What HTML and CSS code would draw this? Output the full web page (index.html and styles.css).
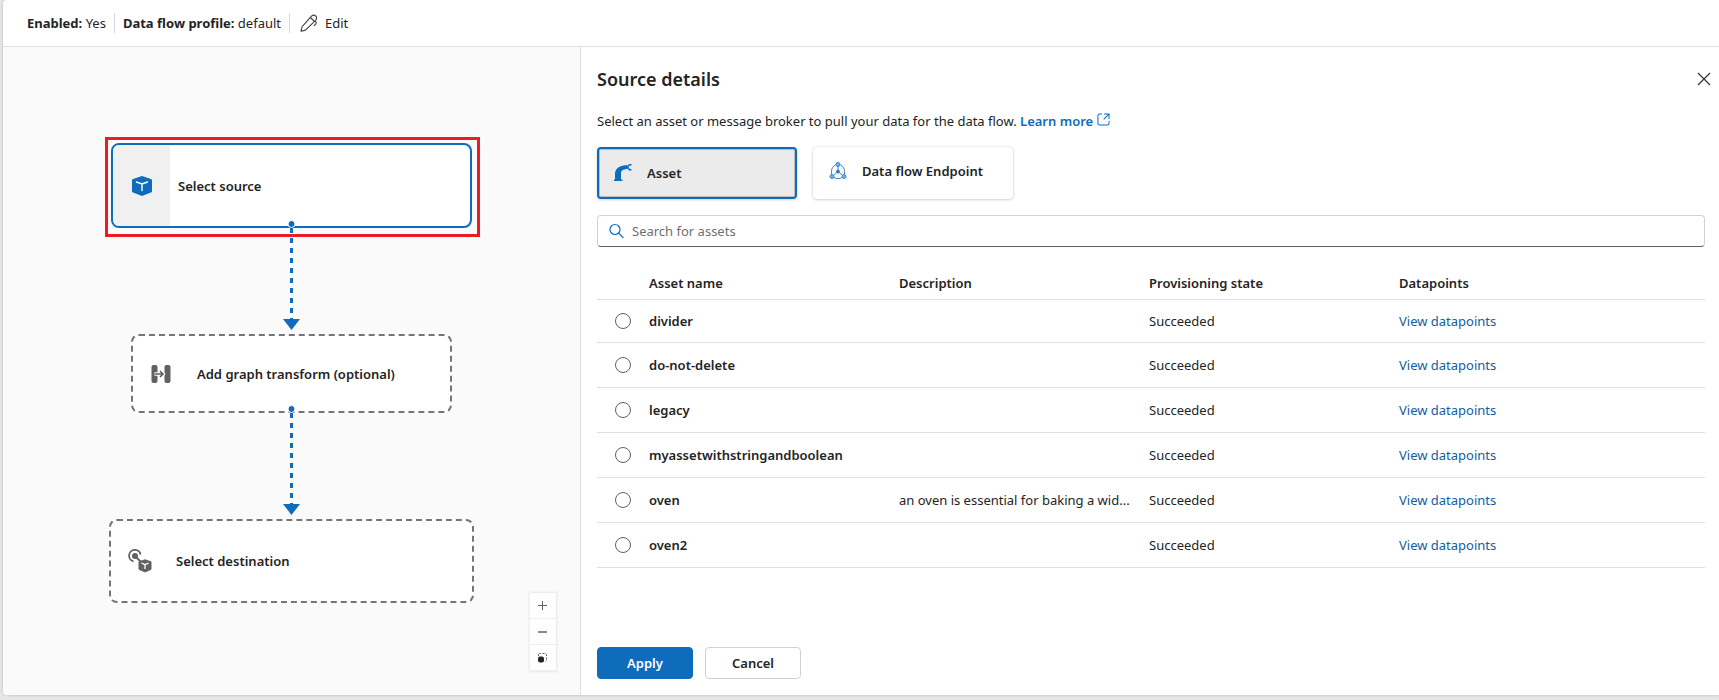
FILE: index.html
```html
<!DOCTYPE html>
<html lang="en">
<head>
  <meta charset="UTF-8" />
  <meta name="viewport" content="width=device-width, initial-scale=1.0"/>
  <title>Data flow – Source details</title>
  <link rel="stylesheet" href="styles.css">
</head>
<body>

  <div class="app">
    <header class="toolbar">
      <div class="toolbar-item"><b>Enabled:</b> Yes</div>
      <div class="toolbar-item"><b>Data flow profile:</b> default</div>
      <button class="edit-btn" type="button">
        <svg width="18" height="18" viewBox="0 0 18 18" fill="none" stroke="#424242" stroke-width="1.1" stroke-linejoin="round" stroke-linecap="round">
          <path d="M11.500 2.200c1.200-1.200 2.900-1.400 4.200-.2s1.200 3-.1 4.300L6 15.600c-.4.400-.8.600-1.300.8L1 17.200l.9-3.900c.1-.5.4-.9.700-1.200zM10.400 3.500l4.100 4M15 7c1.500 1 1.600 2.200.7 3.100l-1.500 1.500"/>
        </svg>
        Edit
      </button>
    </header>

    <main class="workspace">
      <section class="canvas">
        <div class="highlight"></div>

        <button class="node node-source" type="button">
          <span class="node-icon">
            <svg width="22" height="22" viewBox="0 0 22 22">
              <path d="M11 1l9 3q1 .4 1 1.400v10.800q0 1-1 1.400l-9 3.400-9-3.400q-1-.4-1-1.400V5.400q0-1 1-1.400z" fill="#0f6cbd"/>
              <path d="M5.500 7L11 9l5.500-2M11 9v6.500" fill="none" stroke="#fff" stroke-width="1.400" stroke-linecap="round"/>
            </svg>
          </span>
          <span class="node-label">Select source</span>
        </button>

        <button class="node node-transform" type="button">
          <svg width="20" height="20" viewBox="0 0 20 20">
            <rect x="0.500" y="1" width="6" height="18" rx="2" fill="#616161"/>
            <rect x="13.500" y="1" width="6" height="18" rx="2" fill="#616161"/>
            <path d="M3.500 10h8M8.500 6.500L12 10l-3.500 3.500" fill="none" stroke="#fff" stroke-width="3.600"/>
            <path d="M4 10h8M9 7l3 3-3 3" fill="none" stroke="#616161" stroke-width="1.600"/>
          </svg>
          <span class="node-label">Add graph transform (optional)</span>
        </button>

        <button class="node node-destination" type="button">
          <svg width="24" height="24" viewBox="0 0 24 24">
            <path d="M5.500 12.300A5.800 5.800 0 1 1 12.600 5.500" fill="none" stroke="#616161" stroke-width="1.800"/>
            <circle cx="7" cy="7" r="3" fill="#616161"/>
            <path d="M7 7l6 6" stroke="#616161" stroke-width="1.800"/>
            <path d="M17 10.800l6 2v7.500l-6 2.700-6-2.700v-7.500z" fill="#616161" stroke="#616161" stroke-linejoin="round"/>
            <path d="M13.500 14.200l3.500 1.300 3.500-1.300M17 15.500V20" fill="none" stroke="#fff" stroke-width="1.300"/>
          </svg>
          <span class="node-label">Select destination</span>
        </button>

        <!-- edges between the nodes -->
        <svg class="edges" width="20" height="300" viewBox="0 0 20 300">
          <g stroke="#0f6cbd" stroke-width="3" stroke-dasharray="5 5">
            <path d="M9.500 9V101"/>
            <path d="M9.500 194V286"/>
          </g>
          <g fill="#0f6cbd">
            <path d="M1 100h17l-8.500 11z"/>
            <path d="M1 285h17l-8.500 11z"/>
          </g>
          <g fill="#0f6cbd" stroke="#fff">
            <circle cx="9.500" cy="5" r="3.500"/>
            <circle cx="9.500" cy="190" r="3.500"/>
          </g>
        </svg>

        <div class="zoom-controls">
          <button type="button" aria-label="Zoom in">
            <svg width="10" height="10" viewBox="0 0 10 10" stroke="#616161"><path d="M0 4.500h9M4.500 0v9"/></svg>
          </button>
          <button type="button" aria-label="Zoom out">
            <svg width="10" height="10" viewBox="0 0 10 10" stroke="#8a8a8a" stroke-width="2"><path d="M0 5h9"/></svg>
          </button>
          <button type="button" aria-label="Fit view">
            <svg width="10" height="10" viewBox="0 0 10 10">
              <path d="M.5 3V1.500L1.500.5H3M4.500.5h2M7.500.5l1 1V3M8.500 4.500v2M8.500 7.500l-1 1" fill="none" stroke="#616161"/>
              <rect x="0" y="3.500" width="6" height="6" rx="2" fill="#242424"/>
            </svg>
          </button>
        </div>
      </section>

      <section class="details">
        <div class="details-head">
          <h2>Source details</h2>
          <button class="close-btn" type="button" aria-label="Close">
            <svg width="14" height="14" viewBox="0 0 14 14" stroke="#333" stroke-width="1.200"><path d="M1 1l12 12M13 1L1 13"/></svg>
          </button>
        </div>

        <p class="intro">
          Select an asset or message broker to pull your data for the data flow.
          <a href="#">Learn more
            <svg width="13" height="13" viewBox="0 0 14 14" fill="none" stroke="#0f6cbd" stroke-width="1.100" stroke-linecap="round">
              <path d="M5 1H3a2 2 0 0 0-2 2v8a2 2 0 0 0 2 2h8a2 2 0 0 0 2-2V9M8 1h5v5M13 1L7.500 6.500"/>
            </svg>
          </a>
        </p>

        <div class="source-types">
          <button class="type-card selected" type="button">
            <svg width="18" height="18" viewBox="0 0 18 18">
              <path d="M0 15.500h8.500V17H0zM1 15.500V10C1 5.500 4.500 2.200 9.500 1.500L13 1l.5 3.800-4 1C7.800 6.300 7 7.500 7 9.500v6z" fill="#0f6cbd"/>
              <path d="M12 3.500h2M17.500.8h-2.200L13.500 3l1.800 2.700h2.200" fill="none" stroke="#0f6cbd" stroke-width="1.500"/>
            </svg>
            Asset
          </button>
          <button class="type-card" type="button">
            <svg width="18" height="18" viewBox="0 0 18 18" fill="none" stroke="#3a86c8">
              <path d="M6.500 3C4 4 2.500 6.500 2.500 9.500v3M11.500 3c2.500 1 4 3.500 4 6.500v3M5 15.500c2.500 1.500 5.500 1.500 8 0"/>
              <path d="M9 4v4M9 9.500L5 13M9 9.500l4 3.500"/>
              <circle cx="9" cy="9.500" r="1.500" fill="#0f6cbd"/>
              <circle cx="9" cy="2.500" r="2" fill="#7fb2de"/>
              <circle cx="3" cy="14.500" r="2" fill="#7fb2de"/>
              <circle cx="15" cy="14.500" r="2" fill="#7fb2de"/>
            </svg>
            Data flow Endpoint
          </button>
        </div>

        <div class="search-box">
          <svg width="16" height="16" viewBox="0 0 16 16" fill="none" stroke="#0f6cbd" stroke-width="1.200" stroke-linecap="round">
            <circle cx="6" cy="6.500" r="5"/><path d="M9.700 10.200L14 14.500"/>
          </svg>
          <input type="text" placeholder="Search for assets" aria-label="Search for assets">
        </div>

        <table class="assets">
          <colgroup>
            <col class="col-pick"><col class="col-data"><col class="col-data"><col class="col-data"><col>
          </colgroup>
          <thead>
            <tr>
              <th></th><th>Asset name</th><th>Description</th><th>Provisioning state</th><th>Datapoints</th>
            </tr>
          </thead>
          <tbody>
            <tr>
              <td><input type="radio" name="asset" id="a1"></td>
              <td><label for="a1">divider</label></td><td></td><td>Succeeded</td><td><a href="#">View datapoints</a></td>
            </tr>
            <tr>
              <td><input type="radio" name="asset" id="a2"></td>
              <td><label for="a2">do-not-delete</label></td><td></td><td>Succeeded</td><td><a href="#">View datapoints</a></td>
            </tr>
            <tr>
              <td><input type="radio" name="asset" id="a3"></td>
              <td><label for="a3">legacy</label></td><td></td><td>Succeeded</td><td><a href="#">View datapoints</a></td>
            </tr>
            <tr>
              <td><input type="radio" name="asset" id="a4"></td>
              <td><label for="a4">myassetwithstringandboolean</label></td><td></td><td>Succeeded</td><td><a href="#">View datapoints</a></td>
            </tr>
            <tr>
              <td><input type="radio" name="asset" id="a5"></td>
              <td><label for="a5">oven</label></td><td>an oven is essential for baking a wid...</td><td>Succeeded</td><td><a href="#">View datapoints</a></td>
            </tr>
            <tr>
              <td><input type="radio" name="asset" id="a6"></td>
              <td><label for="a6">oven2</label></td><td></td><td>Succeeded</td><td><a href="#">View datapoints</a></td>
            </tr>
          </tbody>
        </table>

        <div class="actions">
          <button class="btn primary" type="button">Apply</button>
          <button class="btn" type="button">Cancel</button>
        </div>
      </section>
    </main>
  </div>

</body>
</html>
```
FILE: styles.css
```css
* {
  box-sizing: border-box;
}
body {
  margin: 0;
  padding: 0 0 5px 3px;
  height: 100vh;
  background: #e6e6e6;
  color: #242424;
  font-family: "Segoe UI", "Noto Sans", sans-serif;
  font-size: 13px;
  line-height: 20px;
}
button, input {
  font: inherit;
  color: inherit;
}
button {
  cursor: pointer;
}
svg {
  display: block;
  flex: none;
}
a {
  color: #115ea3;
  text-decoration: none;
}
.app {
  display: flex;
  flex-direction: column;
  min-height: 100%;
  background: white;
  border-radius: 4px 0 0 4px;
  box-shadow: 0 0 3px rgba(0,0,0,0.2);
  overflow: hidden;
}

/* top bar */
.toolbar {
  display: flex;
  align-items: center;
  height: 47px;
  padding: 0 16px;
  border-bottom: 1px solid #e0e0e0;
}
.toolbar-item {
  padding: 0 8px;
  border-right: 1px solid #d6d6d6;
}
.toolbar-item b {
  font-weight: 700;
}
.edit-btn {
  display: flex;
  align-items: center;
  gap: 7px;
  padding: 0 10px;
  border: none;
  background: none;
}

.workspace {
  display: flex;
  flex: 1;
}

/* flow canvas */
.canvas {
  position: relative;
  width: 577px;
  flex: none;
  background: #fafafa;
}
.highlight {
  position: absolute;
  left: 102px;
  top: 90px;
  width: 375px;
  height: 100px;
  border: 3px solid #ed1c24;
}
.node {
  position: absolute;
  display: flex;
  align-items: center;
  padding: 0;
  background: white;
  border: 2px dashed #757575;
  border-radius: 8px;
  font-weight: 600;
  text-align: left;
}
.node-source {
  left: 108px;
  top: 96px;
  width: 361px;
  height: 85px;
  gap: 8px;
  border: 2px solid #0f6cbd;
  overflow: hidden;
}
.node-icon {
  display: flex;
  align-items: center;
  justify-content: center;
  width: 57px;
  height: 100%;
  background: #f0f0f0;
}
.node-transform {
  left: 128px;
  top: 287px;
  width: 321px;
  height: 79px;
  gap: 26px;
  padding-left: 18px;
}
.node-destination {
  left: 106px;
  top: 472px;
  width: 365px;
  height: 84px;
  gap: 24px;
  padding-left: 17px;
}
.edges {
  position: absolute;
  left: 279px;
  top: 172px;
}
.zoom-controls {
  position: absolute;
  right: 24px;
  bottom: 24px;
  width: 26px;
  box-shadow: 0 0 2px 1px rgba(0,0,0,0.08);
}
.zoom-controls button {
  display: flex;
  align-items: center;
  justify-content: center;
  width: 100%;
  height: 26px;
  padding: 0;
  border: none;
  border-bottom: 1px solid #eee;
  background: #fefefe;
}

/* details panel */
.details {
  display: flex;
  flex-direction: column;
  flex: 1;
  padding: 16px 14px 16px 16px;
  border-left: 1px solid #e0e0e0;
}
.details-head {
  display: flex;
  justify-content: space-between;
  align-items: center;
  height: 32px;
}
.details-head h2 {
  margin: 0;
  font-size: 18px;
  font-weight: 600;
}
.close-btn {
  padding: 0;
  border: none;
  background: none;
  margin-right: -6px;
}
.intro {
  margin: 16px 0;
}
.intro a {
  font-weight: 600;
  color: #0f6cbd;
}
.intro svg {
  display: inline-block;
  vertical-align: 0;
}
.source-types {
  display: flex;
  gap: 16px;
}
.type-card {
  display: flex;
  align-items: center;
  gap: 15px;
  width: 200px;
  height: 52px;
  padding: 0 16px 4px;
  border: none;
  border-radius: 4px;
  background: white;
  box-shadow: 0 0 2px rgba(0,0,0,0.15), 0 1px 3px rgba(0,0,0,0.15);
  font-weight: 600;
}
.type-card.selected {
  padding: 0 15px;
  border: 2px solid #0f6cbd;
  background: #ebebeb;
  box-shadow: inset 0 0 0 1px #bdbdbd, 0 1px 3px rgba(0,0,0,0.18);
}
.search-box {
  display: flex;
  align-items: center;
  gap: 7px;
  height: 32px;
  margin-top: 16px;
  padding: 0 11px;
  border: 1px solid #d1d1d1;
  border-bottom-color: #616161;
  border-radius: 4px;
}
.search-box input {
  flex: 1;
  padding: 0;
  border: none;
  outline: none;
  background: none;
}
.search-box input::placeholder {
  color: #707070;
}
.assets {
  width: 100%;
  margin-top: 21px;
  border-collapse: collapse;
  table-layout: fixed;
}
.col-pick {
  width: 52px;
}
.col-data {
  width: 250px;
}
.assets th, .assets td {
  height: 45px;
  padding: 0;
  border-bottom: 1px solid #e0e0e0;
  text-align: left;
  white-space: nowrap;
}
.assets th {
  height: 31px;
}
.assets th, .assets label {
  font-weight: 600;
}
.assets tbody tr:first-child td {
  height: 43px;
}
.assets input {
  display: block;
  appearance: none;
  width: 16px;
  height: 16px;
  margin: 0 auto;
  border: 1px solid #616161;
  border-radius: 50%;
}
.assets input:checked {
  border: 5px solid #0f6cbd;
}
.actions {
  display: flex;
  gap: 12px;
  margin-top: auto;
}
.btn {
  width: 96px;
  height: 32px;
  padding: 0;
  border: 1px solid #d1d1d1;
  border-radius: 4px;
  background: white;
  font-weight: 600;
}
.btn.primary {
  border-color: #0f6cbd;
  background: #0f6cbd;
  color: white;
}
```
